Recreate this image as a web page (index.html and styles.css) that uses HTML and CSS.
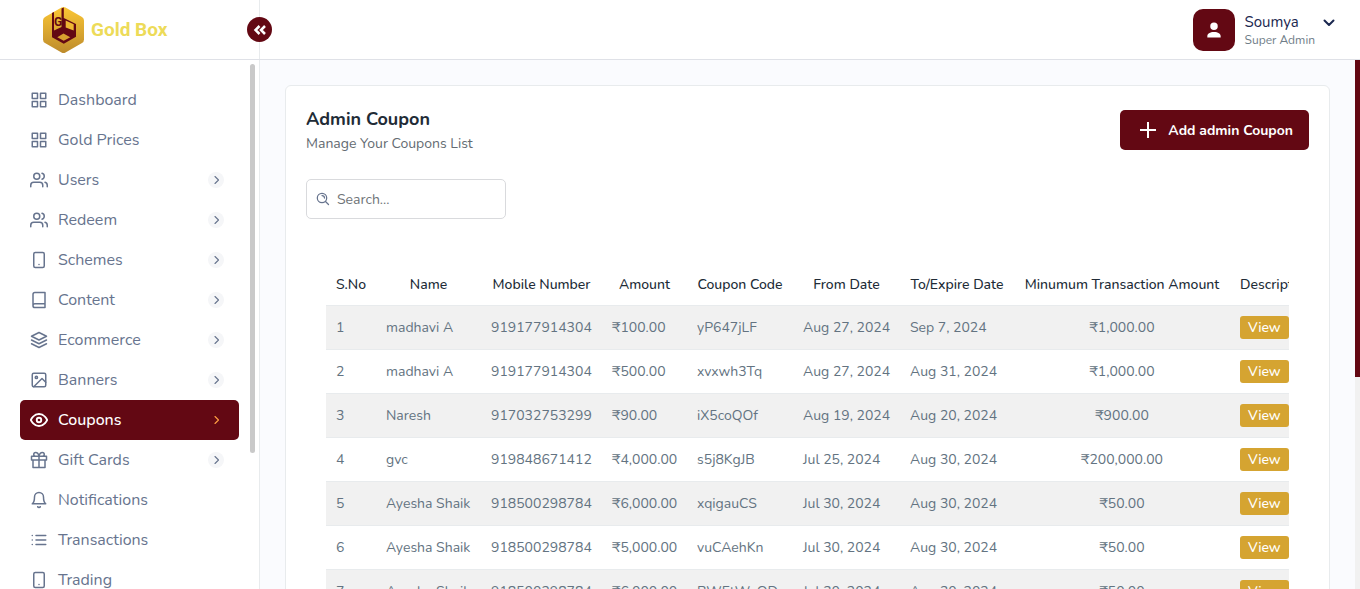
FILE: index.html
```html
<!DOCTYPE html>
<html lang="en">
<head>
<meta charset="utf-8">
<title>Gold Box - Admin Coupon</title>
<link rel="stylesheet" href="styles.css">
</head>
<body>
<svg width="0" height="0" class="sprite" aria-hidden="true">
  <symbol id="grid" viewBox="0 0 24 24"><path d="M3 3h7v7H3zM14 3h7v7h-7zM14 14h7v7h-7zM3 14h7v7H3z"/></symbol>
  <symbol id="users" viewBox="0 0 24 24"><path d="M17 21v-2a4 4 0 0 0-4-4H5a4 4 0 0 0-4 4v2M23 21v-2a4 4 0 0 0-3-3.87M16 3.13a4 4 0 0 1 0 7.75"/><circle cx="9" cy="7" r="4"/></symbol>
  <symbol id="tablet" viewBox="0 0 24 24"><rect x="5" y="2" width="14" height="20" rx="2"/><path d="M12 18h.01"/></symbol>
  <symbol id="book" viewBox="0 0 24 24"><path d="M4 19.5A2.5 2.5 0 0 1 6.500 17H20M6.500 2H20v20H6.500A2.500 2.500 0 0 1 4 19.500v-15A2.500 2.500 0 0 1 6.500 2z"/></symbol>
  <symbol id="layers" viewBox="0 0 24 24"><path d="M12 2 2 7l10 5 10-5zM2 17l10 5 10-5M2 12l10 5 10-5"/></symbol>
  <symbol id="image" viewBox="0 0 24 24"><rect x="3" y="3" width="18" height="18" rx="2"/><circle cx="8.500" cy="8.500" r="1.500"/><path d="m21 15-5-5L5 21"/></symbol>
  <symbol id="eye" viewBox="0 0 24 24"><path d="M1 12s4-8 11-8 11 8 11 8-4 8-11 8-11-8-11-8z"/><circle cx="12" cy="12" r="3"/></symbol>
  <symbol id="gift" viewBox="0 0 24 24"><path d="M20 12v10H4V12M2 7h20v5H2zM12 22V7M12 7H7.500a2.500 2.500 0 0 1 0-5C11 2 12 7 12 7zM12 7h4.500a2.500 2.500 0 0 0 0-5C13 2 12 7 12 7z"/></symbol>
  <symbol id="bell" viewBox="0 0 24 24"><path d="M18 8A6 6 0 0 0 6 8c0 7-3 9-3 9h18s-3-2-3-9M13.730 21a2 2 0 0 1-3.460 0"/></symbol>
  <symbol id="list" viewBox="0 0 24 24"><path d="M8 6h13M8 12h13M8 18h13M3 6h.01M3 12h.01M3 18h.01"/></symbol>
  <symbol id="chevron" viewBox="0 0 16 16"><path d="m7 4.500 3.500 3.500-3.500 3.500"/></symbol>
</svg>

<header class="topbar">
  <div class="brand">
    <a class="logo" href="#">
      <svg class="logo-mark" viewBox="0 0 41 46" aria-hidden="true">
        <defs><linearGradient id="gold" x1="0" y1="0" x2="0" y2="1"><stop offset="0" stop-color="#fbc634"/><stop offset="1" stop-color="#bd8b2c"/></linearGradient></defs>
        <path fill="url(#gold)" d="M18.500.600q2-1.200 4 0L39 10q2 1.200 2 3.500v19q0 2.300-2 3.500l-16.500 9.400q-2 1.200-4 0L2 36q-2-1.200-2-3.500v-19Q0 11.200 2 10z"/>
        <path fill="#630813" d="M9 6l2-1v18.500l7.500-3.500V1.500L20.800.500V11L33 17v12.800l-12.200 7L9 30.300z"/>
        <path fill="#eeb733" d="M22.700 13.500l8 3.800V23.500l-8-3z"/>
        <path fill="#d9a12f" d="M14.300 30.300l6.200-3.700 6.800 3.700-6.600 3.400z"/>
        <text x="11" y="19" class="logo-letter">G</text>
      </svg>
      <span>Gold Box</span>
    </a>
    <button class="collapse" type="button" aria-label="Collapse menu">
      <svg viewBox="0 0 14 14" width="14" height="14"><path d="M6.500 3 2.500 7l4 4M12 3 8 7l4 4"/></svg>
    </button>
  </div>
  <button class="profile" type="button">
    <span class="avatar"><svg viewBox="0 0 24 24" width="20" height="20"><path d="M12 3a4.500 4.500 0 1 1 0 9 4.500 4.500 0 0 1 0-9zM4 21v-1.500c0-3 3-5 8-5s8 2 8 5V21z"/></svg></span>
    <span class="who"><span class="who-name">Soumya</span><span class="who-role">Super Admin</span></span>
    <svg class="caret" viewBox="0 0 12 12" width="12" height="12"><path d="m1.500 3.500 4.500 4.500 4.500-4.500"/></svg>
  </button>
</header>

<div class="shell">
  <nav class="sidebar">
    <ul class="menu">
      <li><a href="#"><svg class="icon"><use href="#grid"/></svg><span>Dashboard</span></a></li>
      <li><a href="#"><svg class="icon"><use href="#grid"/></svg><span>Gold Prices</span></a></li>
      <li><a href="#"><svg class="icon"><use href="#users"/></svg><span>Users</span><svg class="more"><use href="#chevron"/></svg></a></li>
      <li><a href="#"><svg class="icon"><use href="#users"/></svg><span>Redeem</span><svg class="more"><use href="#chevron"/></svg></a></li>
      <li><a href="#"><svg class="icon"><use href="#tablet"/></svg><span>Schemes</span><svg class="more"><use href="#chevron"/></svg></a></li>
      <li><a href="#"><svg class="icon"><use href="#book"/></svg><span>Content</span><svg class="more"><use href="#chevron"/></svg></a></li>
      <li><a href="#"><svg class="icon"><use href="#layers"/></svg><span>Ecommerce</span><svg class="more"><use href="#chevron"/></svg></a></li>
      <li><a href="#"><svg class="icon"><use href="#image"/></svg><span>Banners</span><svg class="more"><use href="#chevron"/></svg></a></li>
      <li><a href="#" class="active"><svg class="icon"><use href="#eye"/></svg><span>Coupons</span><svg class="more"><use href="#chevron"/></svg></a></li>
      <li><a href="#"><svg class="icon"><use href="#gift"/></svg><span>Gift Cards</span><svg class="more"><use href="#chevron"/></svg></a></li>
      <li><a href="#"><svg class="icon"><use href="#bell"/></svg><span>Notifications</span></a></li>
      <li><a href="#"><svg class="icon"><use href="#list"/></svg><span>Transactions</span></a></li>
      <li><a href="#"><svg class="icon"><use href="#tablet"/></svg><span>Trading</span></a></li>
    </ul>
    <div class="menu-scroll"><div class="menu-thumb"></div></div>
  </nav>

  <main class="content">
    <section class="card">
      <div class="card-head">
        <div>
          <h1>Admin Coupon</h1>
          <p>Manage Your Coupons List</p>
        </div>
        <button class="add" type="button">
          <svg viewBox="0 0 16 16" width="16" height="16"><path d="M8 0v16M0 8h16"/></svg>
          Add admin Coupon
        </button>
      </div>
      <label class="search">
        <svg viewBox="0 0 14 14" width="14" height="14"><circle cx="6" cy="6" r="4.700"/><path d="m9.500 9.500 3 3M6 3.500A2.500 2.500 0 0 1 8.500 6"/></svg>
        <input type="search" placeholder="Search..." aria-label="Search coupons">
      </label>
      <div class="table-wrap">
        <table>
          <colgroup><col class="c-no"><col class="c-name"><col class="c-mobile"><col class="c-amount"><col class="c-code"><col class="c-from"><col class="c-to"><col class="c-min"><col class="c-desc"></colgroup>
          <thead>
            <tr><th>S.No</th><th>Name</th><th>Mobile Number</th><th>Amount</th><th>Coupon Code</th><th>From Date</th><th>To/Expire Date</th><th>Minumum Transaction Amount</th><th>Description</th></tr>
          </thead>
          <tbody>
            <tr><td>1</td><td>madhavi A</td><td>919177914304</td><td>₹100.00</td><td>yP647jLF</td><td>Aug 27, 2024</td><td>Sep 7, 2024</td><td class="mid">₹1,000.00</td><td><button class="view" type="button">View</button></td></tr>
            <tr><td>2</td><td>madhavi A</td><td>919177914304</td><td>₹500.00</td><td>xvxwh3Tq</td><td>Aug 27, 2024</td><td>Aug 31, 2024</td><td class="mid">₹1,000.00</td><td><button class="view" type="button">View</button></td></tr>
            <tr><td>3</td><td>Naresh</td><td>917032753299</td><td>₹90.00</td><td>iX5coQOf</td><td>Aug 19, 2024</td><td>Aug 20, 2024</td><td class="mid">₹900.00</td><td><button class="view" type="button">View</button></td></tr>
            <tr><td>4</td><td>gvc</td><td>919848671412</td><td>₹4,000.00</td><td>s5j8KgJB</td><td>Jul 25, 2024</td><td>Aug 30, 2024</td><td class="mid">₹200,000.00</td><td><button class="view" type="button">View</button></td></tr>
            <tr><td>5</td><td>Ayesha Shaik</td><td>918500298784</td><td>₹6,000.00</td><td>xqigauCS</td><td>Jul 30, 2024</td><td>Aug 30, 2024</td><td class="mid">₹50.00</td><td><button class="view" type="button">View</button></td></tr>
            <tr><td>6</td><td>Ayesha Shaik</td><td>918500298784</td><td>₹5,000.00</td><td>vuCAehKn</td><td>Jul 30, 2024</td><td>Aug 30, 2024</td><td class="mid">₹50.00</td><td><button class="view" type="button">View</button></td></tr>
            <tr><td>7</td><td>Ayesha Shaik</td><td>918500298784</td><td>₹6,000.00</td><td>BWEtWeQD</td><td>Jul 30, 2024</td><td>Aug 30, 2024</td><td class="mid">₹50.00</td><td><button class="view" type="button">View</button></td></tr>
          </tbody>
        </table>
      </div>
    </section>
  </main>
  <div class="page-scroll"><div class="page-thumb"></div></div>
</div>
</body>
</html>
```
FILE: styles.css
```css
* { box-sizing: border-box; }

body {
  margin: 0;
  height: 100vh;
  display: flex;
  flex-direction: column;
  overflow: hidden;
  background: #fafbfe;
  color: #212b36;
  font-family: Nunito, Lato, "Noto Sans", sans-serif;
  font-size: 14px;
}

button, input { font: inherit; }
button { cursor: pointer; border: 0; }
svg { flex: none; fill: none; stroke: currentColor; stroke-linecap: round; stroke-linejoin: round; }
.sprite { position: absolute; }

.topbar {
  flex: none;
  height: 60px;
  display: flex;
  justify-content: space-between;
  background: #fff;
  border-bottom: 1px solid #dfe1e7;
}
.brand {
  position: relative;
  width: 260px;
  display: flex;
  align-items: center;
  padding-left: 43px;
  border-right: 1px solid #e8ebed;
}
.logo {
  display: flex;
  align-items: center;
  gap: 7px;
  color: #eddb58;
  font: 700 19px/24px Roboto, sans-serif;
  text-decoration: none;
}
.logo-mark { width: 41px; height: 46px; stroke: none; }
.logo-letter { font: bold 12px Roboto, sans-serif; fill: #630813; }
.collapse {
  position: absolute;
  right: -13px;
  top: 17px;
  width: 25px;
  height: 25px;
  padding: 0;
  display: grid;
  place-items: center;
  border-radius: 50%;
  background: #630813;
  color: #fff;
}
.collapse svg { stroke-width: 2.5; stroke-linecap: butt; stroke-linejoin: miter; }

.profile {
  display: flex;
  align-items: center;
  padding: 0 25px 0 0;
  background: none;
  color: #1b2850;
  text-align: left;
}
.avatar {
  width: 42px;
  height: 42px;
  display: grid;
  place-items: center;
  border-radius: 10px;
  background: #630813;
  color: #fff;
}
.avatar svg { fill: currentColor; stroke: none; }
.who { display: flex; flex-direction: column; margin: 2px 8px 0 10px; }
.who-name { font-size: 15px; line-height: 19px; }
.who-role { font-size: 12px; line-height: 17px; color: #6f7d88; }
.caret { margin-bottom: 14px; stroke-width: 2; }

.shell { flex: 1; min-height: 0; display: flex; }

.sidebar {
  flex: none;
  width: 260px;
  display: flex;
  background: #fff;
  border-right: 1px solid #e8ebed;
  overflow: hidden;
}
.menu { flex: 1; margin: 0; padding: 20px 11px 0 20px; list-style: none; }
.menu a {
  height: 40px;
  display: flex;
  align-items: center;
  gap: 10px;
  padding: 0 15px 0 10px;
  border-radius: 5px;
  color: #67748e;
  font-size: 16px;
  text-decoration: none;
}
.icon { width: 18px; height: 18px; stroke-width: 2; }
.more { width: 16px; height: 16px; margin-left: auto; border-radius: 50%; background: #f5f6f8; stroke-width: 1.1; }
.menu a.active { background: #630813; color: #fff; font-weight: 500; }
.active .icon { stroke-width: 2.5; }
.menu a.active .more { background: none; color: #ff9f43; }
.menu-scroll { flex: none; width: 9px; padding: 4px 4px 0 0; }
.menu-thumb { height: 74%; border-radius: 3px; background: #c9c9c9; }

.content { flex: 1; min-width: 0; padding: 25px; }
.card {
  padding: 20px;
  min-height: 700px;
  background: #fff;
  border: 1px solid #e8ebed;
  border-radius: 6px;
}
.card-head { display: flex; justify-content: space-between; align-items: center; margin-bottom: 25px; }
h1 { margin: 0; font-size: 18px; line-height: 26px; font-weight: 700; color: #212b36; }
.card-head p { margin: 0; padding-top: 2px; font-size: 14px; line-height: 20px; color: #646b72; }
.add {
  height: 40px;
  display: flex;
  align-items: center;
  gap: 12px;
  padding: 0 16px 0 20px;
  border-radius: 5px;
  background: #630813;
  color: #fff;
  font-weight: 700;
}
.add svg { stroke-width: 2; stroke-linecap: butt; }
.search {
  width: 200px;
  height: 40px;
  display: flex;
  align-items: center;
  gap: 7px;
  padding-left: 9px;
  border: 1px solid #d9dadd;
  border-radius: 5px;
  color: #67748e;
}
.search svg { stroke-width: 1.25; }
.search input { flex: 1; min-width: 0; height: 36px; padding: 0; border: 0; outline: 0; background: none; color: #212b36; }
.search input::placeholder { color: #6f7478; }

.table-wrap { margin: 44px 20px 0; overflow: hidden; }
table { width: 1010px; table-layout: fixed; border-collapse: collapse; white-space: nowrap; }
.c-no { width: 50px; }
.c-name { width: 105px; }
.c-mobile { width: 121px; }
.c-amount { width: 85px; }
.c-code { width: 106px; }
.c-from { width: 107px; }
.c-to { width: 114px; }
.c-min { width: 216px; }
th { height: 42px; padding: 2px 10px 0; font-weight: 500; color: #212b36; text-align: center; }
th:first-child, th:last-child { text-align: left; }
td { height: 44px; padding: 0 10px; border-top: 1px solid #e8ebed; color: #637381; }
tbody tr:nth-child(odd) { background: #f1f1f1; }
.mid { text-align: center; }
.view {
  display: block;
  height: 23px;
  padding: 0 8px;
  border-radius: 3px;
  background: #d5a431;
  color: #fff;
  font-weight: 500;
}

.page-scroll { flex: none; width: 5px; background: #f1f1f1; }
.page-thumb { height: 60%; background: #630813; }
```
